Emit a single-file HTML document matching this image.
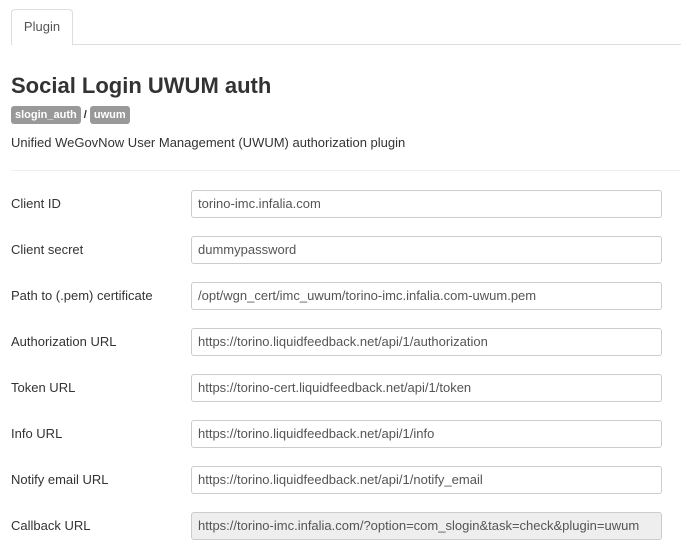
<!DOCTYPE html>
<html><head><meta charset="utf-8"><style>
body{margin:0;background:#fff;font-family:"Liberation Sans",sans-serif;color:#333;font-size:13px;width:681px;height:556px;overflow:hidden;position:relative}
.tabline{position:absolute;left:11px;top:44px;width:670px;height:1px;background:#ddd}
.tab{position:absolute;left:11px;top:9px;width:62px;height:36px;border:1px solid #ddd;border-bottom:none;border-radius:4px 4px 0 0;background:#fff;color:#555;box-sizing:border-box;text-align:center;line-height:34px;font-size:13px}
h1{position:absolute;left:11px;top:73px;margin:0;font-size:22px;font-weight:bold;color:#333;line-height:26px}
.badges{position:absolute;left:11px;top:106px;font-size:11px;font-weight:bold;line-height:18px}
.b{display:inline-block;background:#999;color:#fff;border-radius:3px;padding:0 4px;height:18px}
.desc{position:absolute;left:11px;top:135px}
.hr{position:absolute;left:11px;top:170px;width:669px;height:1px;background:#eee}
.lbl{position:absolute;left:11px}
.in{position:absolute;left:191px;width:471px;height:28px;border:1px solid #ccc;border-radius:3px;box-sizing:border-box;padding-left:6px;line-height:26px;color:#555;background:#fff}
.ro{background:#eee}
</style></head><body>
<div class="tabline"></div><div class="tab">Plugin</div>
<h1>Social Login UWUM auth</h1>
<div class="badges"><span class="b">slogin_auth</span> / <span class="b">uwum</span></div>
<div class="desc">Unified WeGovNow User Management (UWUM) authorization plugin</div>
<div class="hr"></div>
<div class="lbl" style="top:196px">Client ID</div><div class="in" style="top:190px">torino-imc.infalia.com</div>
<div class="lbl" style="top:242px">Client secret</div><div class="in" style="top:236px">dummypassword</div>
<div class="lbl" style="top:288px">Path to (.pem) certificate</div><div class="in" style="top:282px">/opt/wgn_cert/imc_uwum/torino-imc.infalia.com-uwum.pem</div>
<div class="lbl" style="top:334px">Authorization URL</div><div class="in" style="top:328px">https://torino.liquidfeedback.net/api/1/authorization</div>
<div class="lbl" style="top:380px">Token URL</div><div class="in" style="top:374px">https://torino-cert.liquidfeedback.net/api/1/token</div>
<div class="lbl" style="top:426px">Info URL</div><div class="in" style="top:420px">https://torino.liquidfeedback.net/api/1/info</div>
<div class="lbl" style="top:472px">Notify email URL</div><div class="in" style="top:466px">https://torino.liquidfeedback.net/api/1/notify_email</div>
<div class="lbl" style="top:518px">Callback URL</div><div class="in ro" style="top:512px">https://torino-imc.infalia.com/?option=com_slogin&amp;task=check&amp;plugin=uwum</div>
</body></html>
